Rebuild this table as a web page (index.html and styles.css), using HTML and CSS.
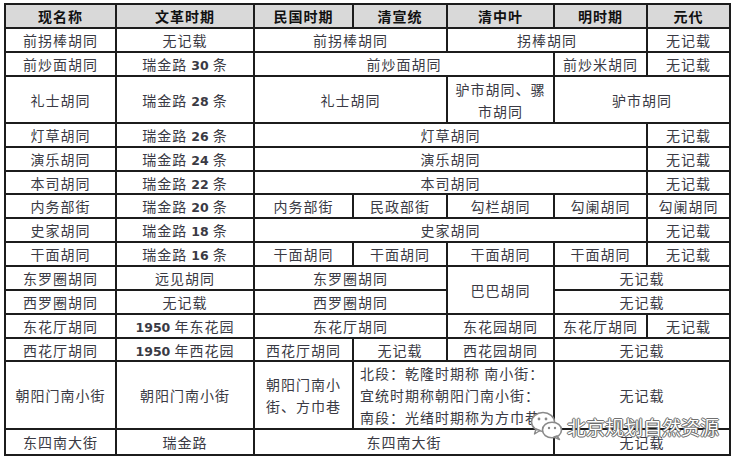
FILE: index.html
```html
<!DOCTYPE html>
<html lang="zh">
<head>
<meta charset="utf-8">
<link rel="stylesheet" href="styles.css">
</head>
<body>
<div class="wrap">
<table class="hutong">
  <colgroup>
    <col class="c1"><col class="c2"><col class="c3"><col class="c4"><col class="c5"><col class="c6"><col class="c7">
  </colgroup>
  <thead>
    <tr class="h24"><th>现名称</th><th>文革时期</th><th>民国时期</th><th>清宣统</th><th>清中叶</th><th>明时期</th><th>元代</th></tr>
  </thead>
  <tbody>
    <tr class="h24"><td>前拐棒胡同</td><td>无记载</td><td colspan="2">前拐棒胡同</td><td colspan="2">拐棒胡同</td><td>无记载</td></tr>
    <tr class="h24"><td>前炒面胡同</td><td>瑞金路 <span class="num">30</span> 条</td><td colspan="3">前炒面胡同</td><td>前炒米胡同</td><td>无记载</td></tr>
    <tr class="h47"><td>礼士胡同</td><td>瑞金路 <span class="num">28</span> 条</td><td colspan="2">礼士胡同</td><td class="two">驴市胡同、骡<br>市胡同</td><td colspan="2">驴市胡同</td></tr>
    <tr class="h24"><td>灯草胡同</td><td>瑞金路 <span class="num">26</span> 条</td><td colspan="4">灯草胡同</td><td>无记载</td></tr>
    <tr class="h24"><td>演乐胡同</td><td>瑞金路 <span class="num">24</span> 条</td><td colspan="4">演乐胡同</td><td>无记载</td></tr>
    <tr class="h23"><td>本司胡同</td><td>瑞金路 <span class="num">22</span> 条</td><td colspan="4">本司胡同</td><td>无记载</td></tr>
    <tr class="h24"><td>内务部街</td><td>瑞金路 <span class="num">20</span> 条</td><td>内务部街</td><td>民政部街</td><td>勾栏胡同</td><td>勾阑胡同</td><td>勾阑胡同</td></tr>
    <tr class="h24"><td>史家胡同</td><td>瑞金路 <span class="num">18</span> 条</td><td colspan="4">史家胡同</td><td>无记载</td></tr>
    <tr class="h24"><td>干面胡同</td><td>瑞金路 <span class="num">16</span> 条</td><td>干面胡同</td><td>干面胡同</td><td>干面胡同</td><td>干面胡同</td><td>无记载</td></tr>
    <tr class="h24"><td>东罗圈胡同</td><td>远见胡同</td><td colspan="2">东罗圈胡同</td><td rowspan="2">巴巴胡同</td><td colspan="2">无记载</td></tr>
    <tr class="h24"><td>西罗圈胡同</td><td>无记载</td><td colspan="2">西罗圈胡同</td><td colspan="2">无记载</td></tr>
    <tr class="h24"><td>东花厅胡同</td><td><span class="num">1950</span> 年东花园</td><td colspan="2">东花厅胡同</td><td>东花园胡同</td><td>东花厅胡同</td><td>无记载</td></tr>
    <tr class="h23"><td>西花厅胡同</td><td><span class="num">1950</span> 年西花园</td><td>西花厅胡同</td><td>无记载</td><td>西花园胡同</td><td colspan="2">无记载</td></tr>
    <tr class="h68"><td>朝阳门南小街</td><td>朝阳门南小街</td><td class="two">朝阳门南小<br>街、方巾巷</td><td colspan="2" class="note">北段：乾隆时期称&nbsp;南小街：<br>宜统时期称朝阳门南小街：<br>南段：光绪时期称为方巾巷</td><td colspan="2">无记载</td></tr>
    <tr class="h26"><td>东四南大街</td><td>瑞金路</td><td colspan="3">东四南大街</td><td colspan="2">无记载</td></tr>
  </tbody>
</table>
<div class="watermark">
  <svg class="wx" width="34" height="30" viewBox="0 0 34 30">
    <ellipse cx="13" cy="11" rx="11.5" ry="9.5" fill="#fff" stroke="#8a8a8a" stroke-width="1.6"/>
    <path d="M6 18 L4.5 23 L10 19.5 Z" fill="#fff" stroke="#8a8a8a" stroke-width="1.4" stroke-linejoin="round"/>
    <ellipse cx="22" cy="19" rx="9.5" ry="7.8" fill="#fff" stroke="#8a8a8a" stroke-width="1.6"/>
    <path d="M27 25 L29.5 28.5 L24 26 Z" fill="#fff" stroke="#8a8a8a" stroke-width="1.4" stroke-linejoin="round"/>
    <circle cx="9" cy="8" r="1.4" fill="#8a8a8a"/>
    <circle cx="16" cy="8" r="1.4" fill="#8a8a8a"/>
    <circle cx="19" cy="17" r="1.2" fill="#8a8a8a"/>
    <circle cx="25" cy="17" r="1.2" fill="#8a8a8a"/>
  </svg>
  <span class="wm-text">北京规划自然资源</span>
</div>
</div>
</body>
</html>
```

FILE: styles.css
```css
html, body {
  margin: 0;
  padding: 0;
  background: #fff;
}
body {
  padding: 3px 0 0 4px;
  font-family: "Noto Sans CJK SC", "DejaVu Sans", sans-serif;
}
.wrap {
  position: relative;
  width: 726px;
}
.hutong {
  border-collapse: collapse;
  table-layout: fixed;
  width: 725px;
  border: 2px solid #1c1c1c;
}
.c1 { width: 111px; }
.c2 { width: 138px; }
.c3 { width: 99px; }
.c4 { width: 94px; }
.c5 { width: 107px; }
.c6 { width: 93px; }
.c7 { width: 83px; }

.hutong th,
.hutong td {
  border: 2px solid #1c1c1c;
  padding: 0 3px;
  text-align: center;
  vertical-align: middle;
  font-size: 14px;
  line-height: 18px;
  letter-spacing: 1px;
  white-space: nowrap;
  overflow: hidden;
}
.hutong th {
  background: #d9d9d9;
  color: #111;
  font-weight: 700;
}
.hutong td {
  color: #3a3a44;
}
.num {
  font-family: "DejaVu Sans", sans-serif;
  font-size: 12.5px;
  line-height: 1;
  letter-spacing: 0;
  font-weight: 600;
}
.h23 > * { height: 21px; }
.h24 > * { height: 22px; }
.h26 > * { height: 24px; }
.h47 > * { height: 45px; }
.h68 > * { height: 66px; }
.hutong td.two {
  line-height: 22px;
}
.hutong td.note {
  text-align: left;
  line-height: 22px;
  padding-left: 6px;
}
.watermark {
  position: absolute;
  left: 526px;
  top: 408px;
  display: flex;
  align-items: center;
  gap: 3px;
}
.wm-text {
  font-family: "Noto Sans CJK SC", sans-serif;
  font-size: 19px;
  color: #fff;
  letter-spacing: 0;
  text-shadow: 0 0 1px #555, 0 0 1px #555, 1px 0 0 #777, -1px 0 0 #777, 0 1px 0 #777, 0 -1px 0 #777;
}
```
